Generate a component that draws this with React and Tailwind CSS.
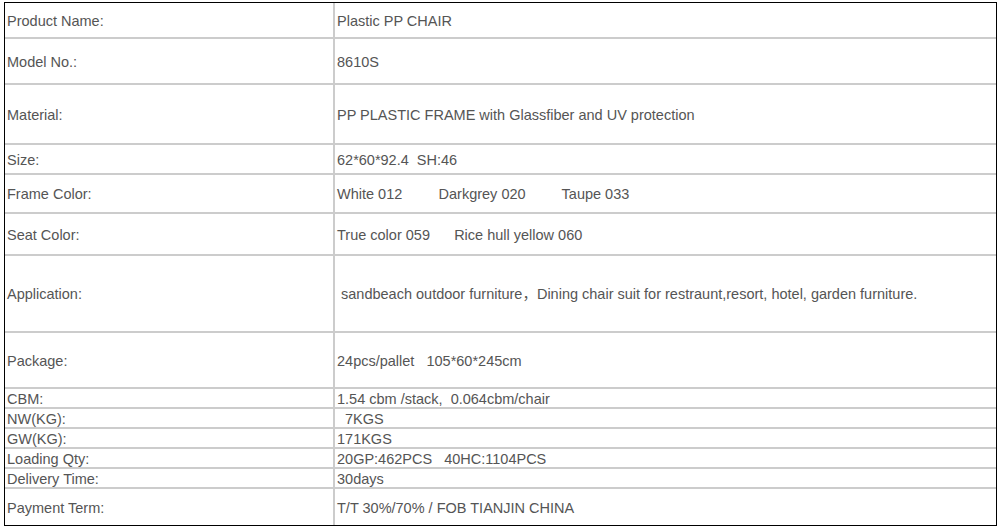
const rows = [
  { label: "Product Name:", value: "Plastic PP CHAIR", h: "h-[34px]" },
  { label: "Model No.:", value: "8610S", h: "h-[44px]" },
  { label: "Material:", value: "PP PLASTIC FRAME with Glassfiber and UV protection", h: "h-[58px]" },
  { label: "Size:", value: "62*60*92.4  SH:46", h: "h-[28px]" },
  { label: "Frame Color:", value: "White 012         Darkgrey 020         Taupe 033", h: "h-[37px]" },
  { label: "Seat Color:", value: "True color 059      Rice hull yellow 060", h: "h-[40px]" },
  {
    label: "Application:",
    value: " sandbeach outdoor furniture，Dining chair suit for restraunt,resort, hotel, garden furniture.",
    h: "h-[75px]",
  },
  { label: "Package:", value: "24pcs/pallet   105*60*245cm", h: "h-[54px]" },
  { label: "CBM:", value: "1.54 cbm /stack,  0.064cbm/chair", h: "h-[18px]" },
  { label: "NW(KG):", value: "  7KGS", h: "h-[18px]" },
  { label: "GW(KG):", value: "171KGS", h: "h-[18px]" },
  { label: "Loading Qty:", value: "20GP:462PCS   40HC:1104PCS", h: "h-[18px]" },
  { label: "Delivery Time:", value: "30days", h: "h-[18px]" },
  { label: "Payment Term:", value: "T/T 30%/70% / FOB TIANJIN CHINA", h: "h-[36px]" },
];

export default function App() {
  return (
    <div
      className="w-[997px] h-[528px] bg-white pt-[2px] pl-[4px] text-[14.5px] leading-[16px] text-[#555555]"
      style={{ fontFamily: '"Liberation Sans", Arial, "Noto Sans CJK SC", sans-serif' }}
    >
      <div className="w-[993px] border border-black flex flex-col">
        {rows.map((r, i) => (
          <div
            key={i}
            className={`flex ${r.h} ${i > 0 ? "border-t-2 border-[#cccccc]" : ""} box-content`}
          >
            <div className="w-[328px] shrink-0 flex items-center pl-[2px] pt-[1px] whitespace-pre overflow-hidden">
              {r.label}
            </div>
            <div className="w-[2px] shrink-0 bg-[#cccccc]" />
            <div className="flex-1 flex items-center pl-[2px] pt-[1px] whitespace-pre overflow-hidden">
              {r.value}
            </div>
          </div>
        ))}
      </div>
    </div>
  );
}
